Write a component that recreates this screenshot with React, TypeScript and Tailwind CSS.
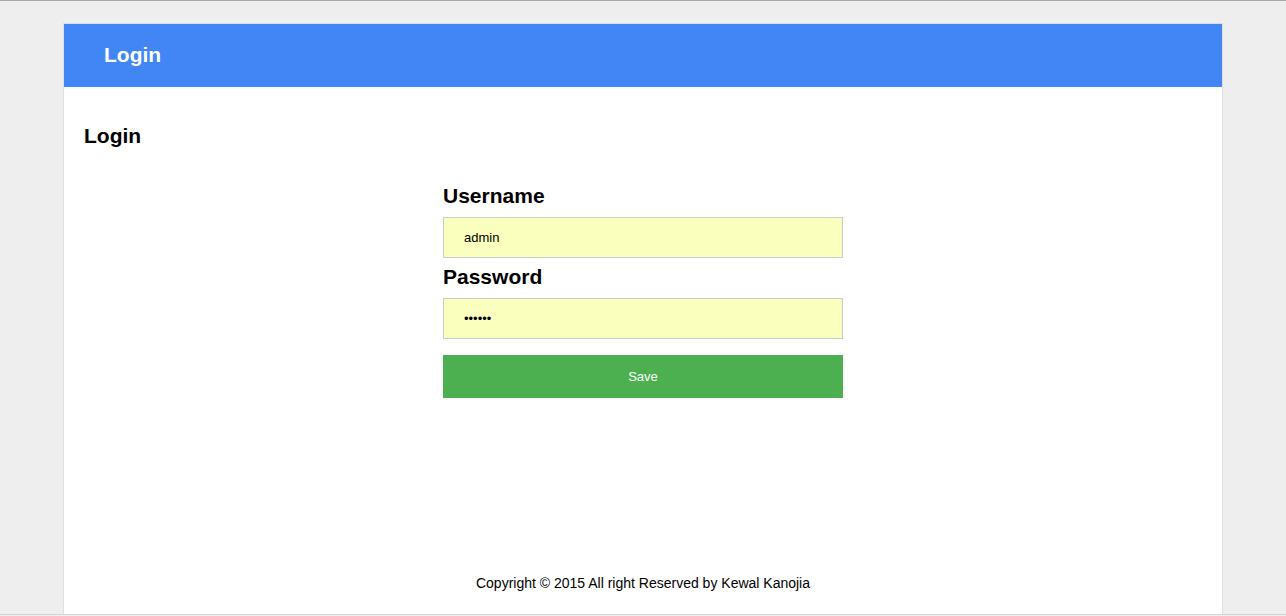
export default function App() {
  return (
    <div className="h-[616px] flex flex-col bg-[#eeeeee] border-t border-[#a8a8a8] font-['Liberation_Sans',Arial,sans-serif] text-black">
      <div className="h-[22px] shrink-0"></div>

      {/* Page box */}
      <div className="flex-1 w-[1160px] ml-[63px] flex flex-col bg-white border border-b-0 border-[#dedede]">
        {/* Top bar */}
        <header className="h-[63px] shrink-0 flex items-center bg-[#4286f5] pl-10 pb-[2px]">
          <span className="text-[21px] font-bold text-white">Login</span>
        </header>

        {/* Content */}
        <main className="flex-1 px-5">
          <h2 className="mt-[37px] text-[21px] font-bold leading-[24px]">Login</h2>

          <form className="w-[400px] mx-auto mt-[36px]" onSubmit={(e) => e.preventDefault()}>
            <label className="block text-[21px] font-bold leading-[24px]">Username</label>
            <input
              type="text"
              defaultValue="admin"
              className="mt-[9px] block w-full h-[41px] px-5 bg-[#faffbd] border border-[#cccccc] text-[13px] outline-none"
            />

            <label className="block mt-[7px] text-[21px] font-bold leading-[24px]">Password</label>
            <input
              type="password"
              defaultValue="admin1"
              className="mt-[9px] block w-full h-[41px] px-5 bg-[#faffbd] border border-[#cccccc] text-[13px] outline-none"
            />

            <button
              type="submit"
              className="mt-4 block w-full h-[43px] bg-[#4caf50] text-white text-[13px]"
            >
              Save
            </button>
          </form>
        </main>

        {/* Footer */}
        <footer className="pb-[23px] text-center text-[14px] leading-4">
          Copyright © 2015 All right Reserved by Kewal Kanojia
        </footer>
      </div>

      <div className="h-px shrink-0 bg-[#d6d6d6]"></div>
      <div className="h-px shrink-0 bg-[#eeeeee]"></div>
    </div>
  );
}
